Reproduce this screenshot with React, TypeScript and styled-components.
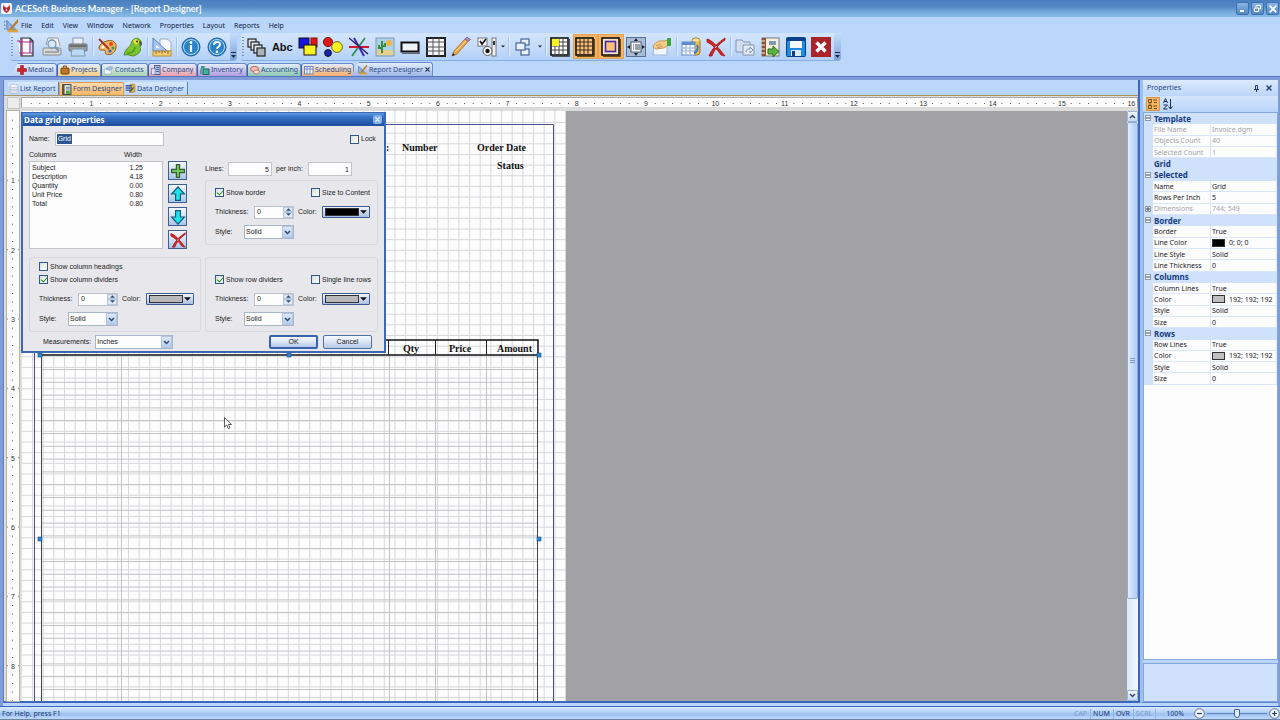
import React, { useEffect, useRef, useState } from "react";
import styled, { createGlobalStyle, css } from "styled-components";

const ui = `"Noto Sans", "Open Sans", sans-serif`;
const dlg = `"Liberation Sans", Arial, sans-serif`;

const GlobalStyle = createGlobalStyle`
  * { box-sizing: border-box; }
  body { margin: 0; font-family: ${ui}; font-size: 7px; line-height: 10px; color: #10213f; }
  button, input, select { font: inherit; color: inherit; margin: 0; padding: 0; border: 0; background: none; border-radius: 0; }
  button { white-space: nowrap; }
  svg { display: block; flex: none; }
`;

/* ---------- shell ---------- */

const Shell = styled.div`
  display: flex;
  flex-direction: column;
  height: 100vh;
  background: #bad7fb;
  overflow: hidden;
`;

const TitleBar = styled.header`
  display: flex;
  align-items: center;
  gap: 3px;
  height: 17px;
  padding: 0 1px;
  flex: none;
  background: linear-gradient(#4a7fbf 0, #5488c5 40%, #78afdf 75%, #86b9e5 100%);
  color: #f4faff;
`;

const AppTitle = styled.h1`
  margin: 0;
  flex: 1;
  font-family: Lato, ${ui};
  font-size: 9px;
  line-height: 14px;
  font-weight: 700;
`;

const WindowButton = styled.button`
  display: flex;
  align-items: center;
  justify-content: center;
  width: 13px;
  height: 13px;
  margin-left: -4px;
  border: 1px solid #3f70b0;
  border-radius: 2px;
  background: linear-gradient(#8ab4e4, #5488c5);
`;

const WindowButtons = styled.div`
  display: flex;
  gap: 6px;
  padding-left: 4px;
`;

const MenuBar = styled.nav`
  display: flex;
  align-items: center;
  gap: 9px;
  height: 16px;
  padding: 1px 0 0 4px;
  flex: none;
  button { line-height: 12px; }
  svg { margin-right: -6px; }
`;

const ToolbarRow = styled.div`
  display: flex;
  gap: 4px;
  height: 28px;
  padding-left: 10px;
  flex: none;
`;

const Toolbar = styled.div<{ $w: number }>`
  display: flex;
  align-items: stretch;
  width: ${(p) => p.$w}px;
  border-radius: 3px;
  border-bottom: 1px solid #86aee4;
  background: linear-gradient(#d3e5fd 0, #c6dcfb 50%, #b3d0f7 100%);
`;

const Grip = styled.span`
  width: 2px;
  margin: 4px 0 4px 1px;
  background: repeating-linear-gradient(#6f93c8 0 1px, transparent 1px 3px);
`;

const ToolButton = styled.button<{ $on?: boolean }>`
  display: flex;
  flex: 1;
  align-items: center;
  justify-content: center;
  margin: 1px 0;
  ${(p) => p.$on && css`background: linear-gradient(#f5b266, #fcb556); box-shadow: inset 0 0 0 1px #e2a05a;`}
`;

const CaretButton = styled.button`
  display: flex;
  align-items: center;
  justify-content: center;
  width: 8px;
`;

const Separator = styled.span`
  width: 1px;
  margin: 4px 1px;
  background: #a3c3ee;
  box-shadow: 1px 0 #e4effe;
`;

const Overflow = styled.button`
  display: flex;
  align-items: flex-end;
  justify-content: center;
  width: 7px;
  padding-bottom: 2px;
  border-radius: 0 3px 3px 0;
  background: linear-gradient(#c6dcfb, #7ea4d8);
`;

const ModuleTabs = styled.nav`
  display: flex;
  align-items: flex-end;
  height: 16px;
  padding-left: 10px;
  flex: none;
  border-bottom: 1px solid #5576bf;
`;

const ModuleTab = styled.button<{ $bg: string; $w: number; $first?: boolean; $active?: boolean }>`
  display: flex;
  align-items: center;
  gap: 1px;
  width: ${(p) => p.$w}px;
  height: 13px;
  padding-left: 2px;
  border: 1px solid #6b8ccb;
  border-bottom: 0;
  border-left-color: ${(p) => (p.$first || p.$active ? "transparent" : "#3d64ae")};
  border-radius: 3px 3px 0 0;
  color: #2b4b8c;
  background: linear-gradient(#e3ecfb, ${(p) => p.$bg});
  ${(p) => p.$first && css`padding-left: 6px; clip-path: polygon(8px 0, 100% 0, 100% 100%, 0 100%);`}
  ${(p) => p.$active && css`height: 14px; padding-left: 6px; margin-left: -3px; clip-path: polygon(8px 0, 100% 0, 100% 100%, 0 100%);`}
`;

const TabClose = styled.span`
  margin-left: auto;
  padding-right: 2px;
`;

const Workspace = styled.main`
  display: flex;
  flex: 1;
  min-height: 0;
  border: solid #7f9bd8;
  border-width: 3px 2px 0 3px;
`;

const Editor = styled.section`
  display: flex;
  flex-direction: column;
  flex: 1;
  min-width: 0;
  border-left: 1px solid #5d7fc4;
  border-right: 2px solid #3f66bd;
  border-bottom: 2px solid #3f66bd;
  margin-bottom: 3px;
`;

const ViewTabs = styled.nav`
  display: flex;
  align-items: flex-end;
  height: 16px;
  padding-left: 4px;
  flex: none;
  border-bottom: 1px solid #a9946a;
`;

const ViewTab = styled.button<{ $on?: boolean; $w: number }>`
  display: flex;
  align-items: center;
  gap: 1px;
  width: ${(p) => p.$w}px;
  height: 13px;
  padding-left: 1px;
  border-right: 1px solid #5a7fc0;
  color: #2b4b8c;
  background: linear-gradient(#d7e7fd, #bcd6f9);
  ${(p) => p.$on && css`background: linear-gradient(#fddcb0, #fbb661); border: 1px solid #d59a55; border-bottom: 0; border-radius: 2px 2px 0 0;`}
`;

/* ---------- rulers and canvas ---------- */

const RulerRow = styled.div`
  display: flex;
  height: 15px;
  flex: none;
  padding: 1px 0 0 3px;
  background: #dcdcdc;
`;

const Corner = styled.button`
  width: 13px;
  height: 12px;
  margin-right: 1px;
  border: 1px solid #c6c6c6;
  background: #ececec;
`;

const RulerStrip = styled.div<{ $vertical?: boolean }>`
  overflow: hidden;
  background: #fdfdfd;
  ${(p) => p.$vertical
    ? css`width: 12px; margin: 0 3px 0 3px; box-shadow: 0 0 0 1px #b9b3a6;`
    : css`flex: 1; min-width: 0; height: 11px; border: 1px solid #a8a8a8; border-bottom-color: #d8d8d8;`}
  text { font: 7px ${dlg}; fill: #333; text-anchor: middle; }
`;

const CanvasRow = styled.div`
  display: flex;
  flex: 1;
  min-height: 0;
  background: #e0dedb;
`;

const Canvas = styled.div`
  position: relative;
  flex: 1;
  min-width: 0;
  overflow: hidden;
  background: #a2a1a6;
`;

const FormPage = styled.div`
  width: 544px;
  height: 100%;
  overflow: hidden;
  background: #fdfdfd;
`;

const FormLabel = styled.span<{ $x: number; $y: number }>`
  position: absolute;
  left: ${(p) => p.$x}px;
  top: ${(p) => p.$y}px;
  font: bold 10px/12px "Liberation Serif", "Times New Roman", serif;
  color: #111;
  white-space: nowrap;
`;

const Cursor = styled.svg`
  position: absolute;
  left: 202px;
  top: 306px;
`;

const ScrollBar = styled.div`
  display: flex;
  flex-direction: column;
  width: 11px;
  background: linear-gradient(90deg, #d9e8fb, #f6faff);
`;

const ScrollButton = styled.button`
  display: flex;
  align-items: center;
  justify-content: center;
  height: 11px;
  border: 1px solid #9bb5d6;
  border-radius: 1px;
  background: linear-gradient(#f4f9ff, #c6daf3);
`;

const ScrollTrack = styled.div`
  flex: 1;
`;

const ScrollThumb = styled.div`
  display: flex;
  align-items: center;
  justify-content: center;
  height: 84%;
  border: 1px solid #8cabd8;
  border-radius: 2px;
  background: linear-gradient(90deg, #e3eefd, #c5dbf9 50%, #b1cdf5);
`;

/* ---------- dialog ---------- */

const Dialog = styled.div`
  position: absolute;
  left: 21px;
  top: 112px;
  width: 365px;
  border: solid #3c69b4;
  border-width: 1px 2px 2px 2px;
  background: #e8e7ec;
  font-family: ${dlg};
  color: #222;
`;

const DialogTitle = styled.div`
  display: flex;
  align-items: center;
  justify-content: space-between;
  height: 13px;
  padding: 0 2px 0 1px;
  background: linear-gradient(#5f9be0 0, #3672c4 30%, #1f4c9f 100%);
  color: #fff;
  font: bold 8px/12px "Open Sans", ${ui};
`;

const DialogClose = styled.button`
  display: flex;
  align-items: center;
  justify-content: center;
  width: 9px;
  height: 9px;
  border-radius: 2px;
  background: #7fb0ec;
`;

const DialogBody = styled.form`
  display: grid;
  grid-template-columns: 172px 1fr;
  column-gap: 4px;
  padding: 6px 6px 2px;
`;

const Line = styled.div<{ $gap?: number; $end?: boolean; $pad?: number }>`
  display: flex;
  align-items: center;
  gap: ${(p) => p.$gap ?? 4}px;
  height: 14px;
  padding-left: ${(p) => p.$pad ?? 0}px;
  ${(p) => p.$end && css`justify-content: flex-end;`}
`;

const TextInput = styled.input<{ $w: number; $right?: boolean }>`
  width: ${(p) => p.$w}px;
  height: 14px;
  padding: 0 2px;
  border: 1px solid #c3c3ca;
  background: #fdfdfd;
  text-align: ${(p) => (p.$right ? "right" : "left")};
`;

const SelectedInput = styled.div`
  display: flex;
  align-items: center;
  width: 109px;
  height: 14px;
  padding: 0 1px;
  border: 1px solid #c3c3ca;
  background: #fdfdfd;
  input { width: 15px; height: 10px; padding-left: 1px; background: #2d5590; color: #fff; }
`;

const Block = styled.div`
  display: flex;
  flex-direction: column;
`;

const ListHead = styled.div`
  display: flex;
  align-items: flex-end;
  height: 15px;
  padding-bottom: 1px;
  span:first-child { width: 95px; }
`;

const ListArea = styled.div`
  display: flex;
  gap: 5px;
`;

const ColumnList = styled.div`
  width: 134px;
  height: 88px;
  padding: 1px 2px;
  border: 1px solid #c3c3ca;
  background: #fdfdfd;
  table { border-collapse: collapse; width: 111px; line-height: 9px; font-size: 7px; }
  td { padding: 0; height: 9px; }
  td:last-child { text-align: right; }
`;

const Stack = styled.div`
  display: flex;
  flex-direction: column;
  gap: 4px;
`;

const SquareButton = styled.button`
  display: flex;
  align-items: center;
  justify-content: center;
  width: 19px;
  height: 19px;
  border: 1px solid #3f5f90;
  background: linear-gradient(#f6f9fe, #aac4e8);
`;

const Group = styled.fieldset<{ $pad: number; $mt?: number }>`
  display: block;
  min-width: 0;
  margin: ${(p) => p.$mt ?? 0}px 0 0;
  padding: ${(p) => p.$pad}px 6px 5px 9px;
  border: 1px solid #d6d6de;
  border-radius: 3px;
`;

const BottomGroup = styled(Group)`
  margin-top: auto;
`;

const CheckRow = styled.div`
  display: flex;
  align-items: center;
  justify-content: space-between;
  height: 13px;
`;

const LinesRow = styled.div`
  display: flex;
  align-items: center;
  height: 14px;
  margin-top: -3px;
  gap: 4px;
  label:first-child { width: 19px; }
  label { width: 28px; }
`;

const FooterLine = styled(Line)`
  margin-top: 3px;
  &:last-child { padding-right: 6px; }
`;

const FieldRow = styled.div<{ $col?: number }>`
  display: flex;
  align-items: center;
  height: 14px;
  margin-top: 6px;
  gap: 4px;
  > * { flex: none; }
  label:first-child { width: ${(p) => p.$col ?? 35}px; }
`;

const FieldCaption = styled.span`
  width: 20px;
`;

const Check = styled.label<{ $w?: number }>`
  display: flex;
  align-items: center;
  gap: 2px;
  ${(p) => p.$w && css`width: ${p.$w}px;`}
  white-space: nowrap;
  input {
    appearance: none;
    display: flex;
    justify-content: center;
    flex: none;
    width: 9px;
    height: 9px;
    border: 1px solid #2f5a8e;
    background: linear-gradient(135deg, #dcdcd8, #fff);
  }
  input:checked::after {
    content: "";
    width: 3px;
    height: 5px;
    border: solid #1f9a26;
    border-width: 0 1px 1px 0;
    transform: rotate(42deg);
  }
`;

const SpinBox = styled.span`
  display: flex;
  width: 40px;
  height: 13px;
  border: 1px solid #bcc3d0;
  background: #fdfdfd;
  input { width: 28px; padding-left: 2px; }
`;

const SpinButtons = styled.span`
  display: flex;
  flex: 1;
  flex-direction: column;
  button { flex: 1; display: flex; align-items: center; justify-content: center; border: 1px solid #b7c7de; background: #dce7f6; }
`;

const SelectBox = styled.span<{ $w: number }>`
  display: grid;
  width: ${(p) => p.$w}px;
  height: 14px;
  border: 1px solid #a9b6ca;
  background: #fdfdfd;
  select { grid-area: 1 / 1; appearance: none; padding-left: 1px; outline: 0; }
`;

const SelectArrow = styled.span`
  grid-area: 1 / 1;
  justify-self: end;
  display: flex;
  align-items: center;
  justify-content: center;
  width: 11px;
  border: 1px solid #b3c6e2;
  background: linear-gradient(#dbe8f9, #b4cdee);
  pointer-events: none;
`;

const ColorButton = styled.button`
  display: flex;
  align-items: center;
  justify-content: space-between;
  width: 48px;
  height: 12px;
  padding: 0 2px;
  border: 1px solid #3c5d92;
  border-radius: 1px;
  background: linear-gradient(#f2f6fc, #a9bfe0);
`;

const Swatch = styled.span<{ $c: string; $w: number }>`
  flex: none;
  width: ${(p) => p.$w}px;
  height: 8px;
  border: 1px solid #333;
  background: ${(p) => p.$c};
`;

const PushButton = styled.button<{ $default?: boolean }>`
  width: 49px;
  height: 14px;
  border: ${(p) => (p.$default ? "2px" : "1px")} solid ${(p) => (p.$default ? "#3763ae" : "#4c72a8")};
  border-radius: 2px;
  background: linear-gradient(#f7faff, #dbe5f5 50%, #b4c8e8);
  line-height: 8px;
`;

/* ---------- property panel ---------- */

const Panel = styled.aside`
  display: flex;
  flex-direction: column;
  width: 138px;
  flex: none;
  margin-bottom: 3px;
  border-left: 3px solid #9fbfee;
  border-bottom: 1px solid #5f86c6;
`;

const PanelTitle = styled.div`
  display: flex;
  align-items: center;
  height: 16px;
  gap: 7px;
  padding: 0 6px 0 4px;
  background: linear-gradient(#dceafd, #bcd6fa);
  color: #27467f;
  h2 { flex: 1; margin: 0; font-size: 7px; font-weight: 400; }
`;

const PanelTools = styled.div`
  display: flex;
  align-items: center;
  gap: 1px;
  height: 16px;
  padding-left: 3px;
  background: linear-gradient(#d3e5fd, #b9d4f9);
`;

const PanelTool = styled.button<{ $on?: boolean }>`
  display: flex;
  align-items: center;
  justify-content: center;
  width: 14px;
  height: 14px;
  ${(p) => p.$on && css`background: #fbb75f; border: 1px solid #d8964a;`}
`;

const PropScroll = styled.div`
  flex: 1;
  min-height: 0;
  border: 1px solid #84a7dd;
  background: #fdfdfd;
`;

const PropTable = styled.table`
  width: 100%;
  height: 272px;
  table-layout: fixed;
  border-collapse: collapse;
  line-height: 9px;
  td, th { padding: 0 0 0 1px; white-space: nowrap; text-align: left; border: 1px solid #dbe7f8; border-top: 0; font-weight: 400; }
  td:first-child, th:first-child { padding: 0; background: #d0e2fb; border-color: #d0e2fb; }
`;

const CategoryRow = styled.tr`
  th, th:first-child { background: #d0e2fb; border-color: #d0e2fb; color: #173c80; font-size: 8px; font-weight: 700; }
`;

const PropRow = styled.tr<{ $dim?: boolean }>`
  color: ${(p) => (p.$dim ? "#a3a3a8" : "#1b1b1f")};
`;

const ColorValue = styled.span`
  display: flex;
  align-items: center;
  gap: 4px;
`;

const Expander = styled.button`
  display: flex;
  align-items: center;
  justify-content: center;
  width: 6px;
  height: 6px;
  border: 1px solid #8b98b0;
  background: #fdfdfd;
`;

const Description = styled.div`
  height: 39px;
  margin-top: 3px;
  border: 1px solid #84a7dd;
  background: #d0e2fb;
`;

/* ---------- status bar ---------- */

const StatusBar = styled.footer`
  display: flex;
  align-items: center;
  height: 14px;
  flex: none;
  padding: 1px 0 0 2px;
  border-top: 1px solid #3f66bd;
  border-bottom: 1px solid #6a83a8;
  background: linear-gradient(#dbe9fd 0, #b6d2f8 40%, #9dc0f0 60%, #c1dafb 100%);
  color: #1a3a76;
`;

const Message = styled.span`
  flex: 1;
`;

const Indicator = styled.span<{ $off?: boolean }>`
  padding: 0 3px 0 2px;
  border-right: 1px solid #90b2e2;
  color: ${(p) => (p.$off ? "#7c9cca" : "#1a3a76")};
`;

const Zoom = styled.div`
  display: flex;
  align-items: center;
  gap: 2px;
  padding-left: 10px;
  button { display: flex; }
  label { margin-right: 8px; }
  input { appearance: none; width: 60px; height: 11px; background: linear-gradient(#5f86bd, #5f86bd) center / 100% 1px no-repeat; }
  input::-webkit-slider-thumb { appearance: none; width: 6px; height: 9px; border: 1px solid #44629a; border-radius: 1px 1px 3px 3px; background: #e4effd; }
`;

/* ---------- icons ---------- */

const Svg = ({ s = 20, children }: { s?: number; children: React.ReactNode }) => (
  <svg width={s} height={s} viewBox="0 0 20 20" fill="none" aria-hidden="true">{children}</svg>
);

const gridPath = "M5 1V19M9 1V19M13 1V19M1 5H19M1 9H19M1 13H19";

const icons: Record<string, React.ReactNode> = {
  page: <><rect x="3" y="2" width="12" height="16" fill="#fff" /><path d="M5 1H14L17 4V19H5Z" stroke="#333" strokeWidth="1.2" /><path d="M1 4H4M6 1V19M14 4V16M3 5H17M3 16H17" stroke="#a52a8a" strokeWidth="1.2" /><path d="M14 1V4H17" stroke="#333" /></>,
  preview: <><path d="M4 8L6 1H16L18 9" fill="#f5f5f2" stroke="#999" /><rect x="1" y="11" width="18" height="7" rx="1" fill="#d8d8d5" stroke="#8a8a88" /><path d="M3 15H17" stroke="#777" /><circle cx="10" cy="7" r="4" fill="#d6eafa" stroke="#7794b5" strokeWidth="1.3" /><path d="M13 10L17 14" stroke="#7794b5" strokeWidth="2" /></>,
  print: <><rect x="5" y="1" width="10" height="7" fill="#e8f1fb" stroke="#8796a8" /><rect x="1" y="7" width="18" height="7" rx="1" fill="#9a9d9f" stroke="#6d7072" /><path d="M2 9H18" stroke="#444" /><path d="M4 12H16L17 19H3Z" fill="#b8dbf3" stroke="#7d98ac" /></>,
  palette: <><path d="M10 4C16 2 20 6 19 11C18 16 13 19 9 17C7 16 10 14 7 13C4 13 2 14 2 10C3 7 6 5 10 4Z" fill="#f2b45c" stroke="#8f5a22" /><circle cx="14" cy="7" r="2" fill="#f03d2a" /><circle cx="16" cy="11" r="1.6" fill="#3a9d3a" /><circle cx="13" cy="14" r="1.6" fill="#285fc7" /><circle cx="6" cy="10" r="1.5" fill="#fff" /><path d="M2 2L12 12" stroke="#a7312a" strokeWidth="1.8" /></>,
  parrot: <><path d="M1 18C2 12 6 11 8 7C9 2 13 0 16 2C19 4 19 8 17 10C19 14 15 18 10 19C7 19 6 17 1 18Z" fill="#7cc52c" stroke="#3f7d14" strokeWidth=".8" /><path d="M4 16C8 17 12 14 12 10" stroke="#4a9a20" strokeWidth="1.5" /><path d="M10 4C12 1 16 2 16 5L13 8Z" fill="#f3e12c" /><path d="M16 4C19.500 4 20 8 17 9Z" fill="#555" /><circle cx="14" cy="4.500" r=".9" fill="#222" /></>,
  ruler: <><path d="M8 2H15L19 5V14H8Z" fill="#fafcff" stroke="#9ab" /><path d="M1 1V14H15Z" fill="#a9c5ef" stroke="#5a83c5" /><path d="M4 8V11H8Z" fill="#f4f8ff" /><rect x="1" y="14" width="18" height="5" fill="#f4cf74" stroke="#b98c34" /><path d="M4 14V17M7 14V16M10 14V17M13 14V16M16 14V17" stroke="#8c6420" /></>,
  info: <><circle cx="10" cy="10" r="9" fill="#2d82c6" stroke="#1c5f9e" /><circle cx="10" cy="10" r="7.5" stroke="#b6dcf5" /><circle cx="10" cy="5.5" r="1.4" fill="#fff" /><path d="M10 8V15" stroke="#fff" strokeWidth="2.2" /></>,
  help: <><circle cx="10" cy="10" r="9" fill="#2d82c6" stroke="#1c5f9e" /><circle cx="10" cy="10" r="7.5" stroke="#b6dcf5" /><path d="M7 8C7 4 13 4 13 7.5C13 10 10 9.5 10 12" stroke="#fff" strokeWidth="1.9" /><circle cx="10" cy="14.7" r="1.3" fill="#fff" /></>,
  layers: <g stroke="#222" strokeWidth="1.2" fill="#dfe7ee"><rect x="1" y="2" width="8" height="8" /><rect x="4" y="5" width="8" height="8" /><rect x="7" y="8" width="8" height="8" /><rect x="10" y="11" width="8" height="8" fill="#aab4bd" /></g>,
  squares: <><rect x="1" y="1" width="10" height="10" fill="#1616e0" stroke="#111" /><rect x="13" y="1" width="6" height="9" fill="#e01818" stroke="#7a1010" /><rect x="6" y="8" width="12" height="10" fill="#fbf321" stroke="#111" /></>,
  circles: <><circle cx="5" cy="5" r="4.6" fill="#e01818" stroke="#7a1010" /><circle cx="14" cy="10" r="5.4" fill="#fbf321" stroke="#6d6a20" /><circle cx="5" cy="16" r="3.4" fill="#1626b8" stroke="#111" /></>,
  lines: <><path d="M5 1L15 19" stroke="#3b2bb5" strokeWidth="2" /><path d="M16 1L3 19" stroke="#2a8a48" strokeWidth="1.6" /><path d="M0 10H20" stroke="#d01830" strokeWidth="2" /><path d="M0 1L19 17" stroke="#20106a" strokeWidth="1.2" /></>,
  image: <><rect x="1" y="1" width="18" height="18" fill="#a7d2ea" stroke="#8b98a5" /><rect x="2" y="13" width="16" height="5" fill="#e7cf8c" /><circle cx="14" cy="6" r="3" fill="#f4b23c" /><path d="M7 4V16M4 8V11H7M10 6V9H7" stroke="#3d8b37" strokeWidth="2" /></>,
  rect: <><rect x="1.5" y="5.5" width="17" height="9" fill="#eef2f7" stroke="#111" strokeWidth="2" /><path d="M2 16.5H20V7" stroke="#667" /></>,
  table: <><rect x="1" y="1" width="18" height="18" fill="#f6f8fa" stroke="#222" strokeWidth="2" /><path d="M7 1V19M13 1V19M1 5H19M1 10H19M1 14H19" stroke="#555" /></>,
  pencil: <><path d="M1 19L3 14L14 2L17 4.500L6 17Z" fill="#f3a84a" stroke="#a76820" strokeWidth=".8" /><path d="M14 2L16 0L19.500 2.500L17 4.500Z" fill="#b98bc8" stroke="#75578a" strokeWidth=".8" /><path d="M1 19L2 16L4 18Z" fill="#222" /><path d="M4 15L15 4" stroke="#fbd695" /></>,
  controls: <><rect x="1" y="1" width="9" height="8" fill="#fff" stroke="#777" /><path d="M3 4L5 7L9 2" stroke="#111" strokeWidth="1.7" /><rect x="15" y="1" width="4" height="18" fill="#f4f4f4" stroke="#777" /><rect x="16" y="4" width="2" height="4" fill="#333" /><circle cx="10.500" cy="14" r="4.500" fill="#fff" stroke="#555" /><circle cx="10.500" cy="14" r="2.200" fill="#111" /></>,
  arrange: <g stroke="#526f9c" strokeWidth="1.3" fill="#e8f1fd"><rect x="8" y="2" width="8" height="6" /><rect x="8" y="12" width="8" height="6" /><rect x="3" y="6" width="9" height="7" /></g>,
  snap: <><rect x="1" y="1" width="17" height="17" fill="#fff" stroke="#111" strokeWidth="1.6" /><path d={gridPath} stroke="#444" /><rect x="2" y="2" width="7" height="7" fill="#f8f020" /><path d="M19.500 2V19.500H2" stroke="#555" /></>,
  grid: <><rect x="1" y="1" width="17" height="17" fill="#fbc078" stroke="#111" strokeWidth="1.6" /><path d={gridPath} stroke="#3a2c1c" /><path d="M19.500 2V19.500H2" stroke="#6b4a20" /></>,
  frame: <><rect x="1" y="1" width="17" height="17" fill="#fde3c4" stroke="#111" strokeWidth="1.600" /><rect x="4.500" y="4.500" width="10" height="10" fill="#fbc078" stroke="#3c2bb0" strokeWidth="1.600" /><path d="M19.500 2V19.500H2" stroke="#6b4a20" /></>,
  fit: <><rect x="0.500" y="0.500" width="19" height="19" fill="#a9bdd6" stroke="#5a7090" /><rect x="5" y="5" width="10" height="10" fill="#fff" stroke="#44576f" /><path d="M9 8H14M9 10H14M9 12H14M7 8H8M7 10H8M7 12H8" stroke="#345" /><path d="M10 1L12 4H8ZM10 19L12 16H8ZM1 10L4 8V12ZM19 10L16 8V12Z" fill="#223" /></>,
  hand: <><path d="M2 9H15V18H1Z" fill="#f2f7fd" stroke="#9fb4d1" /><path d="M1 10C3 5 7 3 12 4L16 3V8L12 11L4 12Z" fill="#f6cc86" stroke="#b98740" strokeWidth=".8" /><path d="M4 9L9 7M5 11L11 9" stroke="#b98740" strokeWidth=".8" /><rect x="15" y="1" width="4" height="8" rx="1" fill="#38a838" /></>,
  dbtable: <><rect x="11" y="1" width="8" height="17" rx="3" fill="#f0bd4a" stroke="#a77a20" /><ellipse cx="15" cy="3" rx="3.500" ry="1.500" fill="#fbe3a0" /><rect x="1" y="5" width="13" height="13" fill="#fff" stroke="#6a8fc0" /><rect x="1" y="5" width="13" height="3" fill="#5d8fd0" /><path d="M5 8V18M9 8V18M1 11H14M1 14H14" stroke="#8badd6" /><path d="M16 8C18 11 16 15 13 16" stroke="#3c7ac8" strokeWidth="2" /></>,
  remove: <path d="M1 2C6 3 11 9 19 19L15 18C11 12 7 8 1 5ZM19 1C13 5 6 11 3 19H6C8 13 13 7 19 3Z" fill="#d8221c" stroke="#9f1410" strokeWidth=".8" />,
  folders: <><path d="M1 3H7L9 5H15V15H1Z" fill="#d2dded" stroke="#8496b0" /><path d="M8 8H19V18H8Z" fill="#e3ebf6" stroke="#8496b0" /><path d="M11 15C11 12 13 12 15 12V10L18 13L15 16V14" stroke="#7f8fa8" /></>,
  exporter: <><rect x="2" y="1" width="17" height="18" fill="#f6f0dc" stroke="#777" /><rect x="2" y="1" width="4" height="18" fill="#8a5535" /><path d="M1 4H5M1 8H5M1 12H5M1 16H5" stroke="#eee" /><path d="M9 5H16M9 7H16" stroke="#5880a8" strokeWidth="1.500" /><path d="M8 12H13V9L19 14.500L13 20V17H8Z" fill="#5bb23c" stroke="#2c6f1c" /></>,
  save: <><rect x="0.500" y="0.500" width="19" height="19" rx="1" fill="#1f8be0" stroke="#0c3f8c" /><rect x="1" y="1" width="18" height="3" fill="#0c418f" /><rect x="4" y="4" width="12" height="7" fill="#f6faff" /><rect x="5" y="13" width="10" height="6" fill="#dfeaf8" /><rect x="6" y="14" width="3" height="5" fill="#153f7c" /></>,
  close: <><rect x="0" y="0" width="20" height="20" fill="#a92328" /><path d="M5.500 5.500L14.500 14.500M14.500 5.500L5.500 14.500" stroke="#fff" strokeWidth="3.400" /></>,
  designer: <><path d="M1 2V15H14Z" fill="#8fb0e0" stroke="#4468a5" /><path d="M6 15L18 1" stroke="#b87b2c" strokeWidth="3" /><path d="M2 17H18" stroke="#dca23c" strokeWidth="4" /></>,
  medical: <path d="M7 1H13V7H19V13H13V19H7V13H1V7H7Z" fill="#d0202a" stroke="#8f1018" />,
  projects: <><rect x="2" y="6" width="16" height="12" rx="2" fill="#c07828" stroke="#74430f" strokeWidth="2" /><path d="M7 5V2H13V5" stroke="#74430f" strokeWidth="2" /></>,
  contacts: <><path d="M1 8H14V18H1Z" fill="#f4f8fd" stroke="#8fa6c6" /><path d="M4 8L12 3L18 5L12 11Z" fill="#9fc3ea" stroke="#6484ac" /></>,
  company: <><rect x="7" y="1" width="11" height="18" fill="#b9c7e8" stroke="#4b5f95" strokeWidth="2" /><rect x="1" y="7" width="7" height="12" fill="#dce4f4" stroke="#4b5f95" /><path d="M10 5H16M10 9H16M10 13H16" stroke="#4b5f95" strokeWidth="2" /></>,
  inventory: <><path d="M2 2H9V7H2Z" fill="#2f9a7c" /><rect x="6" y="8" width="12" height="11" fill="#39b5a4" stroke="#1c6b62" strokeWidth="2" /><path d="M2 7V18" stroke="#246e5c" strokeWidth="2" /></>,
  accounting: <><ellipse cx="9" cy="8" rx="8" ry="5" fill="#f6c3bd" stroke="#c05a52" strokeWidth="2" /><ellipse cx="13" cy="14" rx="6" ry="4" fill="#f9dcd6" stroke="#c05a52" strokeWidth="1.500" /></>,
  scheduling: <><rect x="1" y="3" width="17" height="15" fill="#f6f9fe" stroke="#6b88bd" strokeWidth="2" /><path d="M6 3V18M12 3V18M1 8H18" stroke="#6b88bd" strokeWidth="2" /></>,
  listrep: <><path d="M2 4V16C2 20 18 20 18 16V4" fill="#dfe6ee" stroke="#8f9db0" /><ellipse cx="10" cy="4" rx="8" ry="3" fill="#fff" stroke="#8f9db0" /><path d="M2 10C4 13 16 13 18 10" stroke="#8f9db0" /></>,
  formdes: <><rect x="3" y="1" width="15" height="18" fill="#e4efe2" stroke="#3e4c4a" strokeWidth="2" /><path d="M5 1V19" stroke="#7d4a22" strokeWidth="3" /><path d="M9 6H16M9 9H16" stroke="#4a7aa8" strokeWidth="2" /><path d="M9 12H16V18H9Z" fill="#48a83c" /></>,
  datades: <><rect x="9" y="2" width="9" height="15" rx="2" fill="#e9b23c" stroke="#8f6a1c" /><path d="M1 5H13M1 9H13M1 13H13" stroke="#3b5f9c" strokeWidth="2.500" /><path d="M8 17L16 8" stroke="#55504a" strokeWidth="2" /></>,
  logo: <><rect width="20" height="20" rx="3" fill="#f7f4f4" /><path d="M5 3C2 9 4 15 10 18C16 15 18 9 15 3C14 7 12 8 10 8C8 8 6 7 5 3Z" fill="#c02432" /><path d="M10 10L12 14H8Z" fill="#fff" /></>,
  plus: <path d="M8 2H12V8H18V12H12V18H8V12H2V8H8Z" fill="#6fc95a" stroke="#3c5a3a" strokeWidth="1.500" />,
  up: <path d="M10 1L18 10H13V18H7V10H2Z" fill="#1fe3ea" stroke="#185a7c" strokeWidth="1.500" />,
  down: <path d="M10 19L18 10H13V2H7V10H2Z" fill="#1fe3ea" stroke="#185a7c" strokeWidth="1.500" />,
};

const Abc = styled.span`
  font: bold 11px/20px ${dlg};
  color: #111;
`;

const Icon = ({ n, s = 20 }: { n: string; s?: number }) => <Svg s={s}>{icons[n]}</Svg>;

const Caret = ({ c = "#222", w = 5 }: { c?: string; w?: number }) => (
  <svg width={w} height={w > 5 ? 4 : 3} viewBox="0 0 6 3" aria-hidden="true"><path d="M0 0H6L3 3Z" fill={c} /></svg>
);

const Chevron = ({ up }: { up?: boolean }) => (
  <svg width="7" height="5" viewBox="0 0 7 5" fill="none" aria-hidden="true">
    <path d={up ? "M1 4L3.500 1.500L6 4" : "M1 1L3.500 3.500L6 1"} stroke="#33496d" strokeWidth="1.500" />
  </svg>
);

const Cross = ({ c, s = 6 }: { c: string; s?: number }) => (
  <svg width={s} height={s} viewBox="0 0 6 6" fill="none" aria-hidden="true"><path d="M0.500 0.500L5.500 5.500M5.500 0.500L0.500 5.500" stroke={c} strokeWidth="1.300" /></svg>
);

const OverflowMark = () => (
  <svg width="5" height="6" viewBox="0 0 5 6" aria-hidden="true"><path d="M0 0H5V1H0ZM0 3H5L2.500 6Z" fill="#1c2c48" /></svg>
);

const renderTool = (t: string, i: number) => {
  if (t === "|") return <Separator key={i} />;
  if (t === "v") return <CaretButton key={i} type="button" aria-label="More"><Caret w={4} /></CaretButton>;
  if (t === "abc") return <ToolButton key={i} type="button"><Abc>Abc</Abc></ToolButton>;
  return <ToolButton key={i} type="button" aria-label={t} $on={t === "grid" || t === "frame"}><Icon n={t} /></ToolButton>;
};

const leftTools = ["page", "preview", "print", "|", "palette", "parrot", "|", "ruler", "|", "info", "help"];
const rightTools = ["layers", "abc", "squares", "circles", "lines", "image", "rect", "table", "pencil", "controls", "v", "|", "arrange", "v", "|", "snap", "grid", "frame", "fit", "hand", "|", "dbtable", "remove", "|", "folders", "exporter", "save", "close"];

const modules = [
  { t: "Medical", i: "medical", w: 47, bg: "#b8cff3" },
  { t: "Projects", i: "projects", w: 44, bg: "#f7cf83" },
  { t: "Contacts", i: "contacts", w: 47, bg: "#a9d2b0" },
  { t: "Company", i: "company", w: 49, bg: "#eb9fab" },
  { t: "Inventory", i: "inventory", w: 50, bg: "#b29ce0" },
  { t: "Accounting", i: "accounting", w: 54, bg: "#8cc8b2" },
  { t: "Scheduling", i: "scheduling", w: 53, bg: "#f9ae66" },
];

/* ---------- drawings ---------- */

const INCH = 208 / 3;
const range = (n: number) => Array.from({ length: n }, (_, i) => i);

/* Draws ticks and inch numbers for as much of the strip as is visible. */
const Ruler = ({ vertical }: { vertical?: boolean }) => {
  const strip = useRef<HTMLDivElement>(null);
  const [size, setSize] = useState(0);
  useEffect(() => {
    const el = strip.current;
    if (!el) return;
    const measure = () => setSize(vertical ? el.clientHeight : el.clientWidth);
    measure();
    const observer = new ResizeObserver(measure);
    observer.observe(el);
    return () => observer.disconnect();
  }, [vertical]);
  return (
    <RulerStrip $vertical={vertical} ref={strip}>
      <svg width={vertical ? 12 : size} height={vertical ? size : 9}>
        {range(Math.ceil((size * 8) / INCH)).slice(1).map((k) => {
          const p = (k * INCH) / 8;
          if (k % 8 === 0) {
            if (p + 5 > size) return null;
            return vertical
              ? <g key={k}><text x="6" y={p + 3}>{k / 8}</text><path d={`M0 ${p}h1M11 ${p}h1`} stroke="#888" /></g>
              : <text key={k} x={p} y="8">{k / 8}</text>;
          }
          return <rect key={k} x={vertical ? 5 : p} y={vertical ? p : 5} width="1" height="1" fill="#555" />;
        })}
      </svg>
    </RulerStrip>
  );
};

const Handle = ({ x, y }: { x: number; y: number }) => (
  <rect x={x - 2} y={y - 2} width="4" height="4" fill="#2f86cf" stroke="#174a80" strokeWidth=".6" />
);

const FormDrawing = () => (
  <svg width="544" height="1200" fill="none" aria-hidden="true">
    <g stroke="#d8d8dd">
      {range(51).map((k) => <path key={k} d={`M${10.5 + k * 10.66} 0V1200`} />)}
      {range(112).map((k) => <path key={k} d={`M0 ${11.5 + k * 10.65}H544`} />)}
    </g>
    <path d="M12.500 1200V13.500H531.500V1200" stroke="#4a4f88" />
    <g stroke="#c2c2c5">
      {range(60).map((k) => <path key={k} d={`M19 ${258.5 + k * 12.8}H516`} />)}
      <path d="M99.500 245V1200M367.500 245V1200M413.500 245V1200M464.500 245V1200" />
    </g>
    <path d="M19.500 244V1200M515.500 244V1200" stroke="#444" />
    <rect x="19" y="229" width="497" height="15" stroke="#111" strokeWidth="1.500" />
    <path d="M366.500 229V244M413.500 229V244M464.500 229V244" stroke="#222" />
    <Handle x={18} y={244} /><Handle x={267} y={244} /><Handle x={517} y={244} />
    <Handle x={18} y={428} /><Handle x={517} y={428} />
  </svg>
);

/* ---------- dialog pieces ---------- */

const Select = ({ id, w, value }: { id: string; w: number; value: string }) => (
  <SelectBox $w={w}>
    <select id={id} defaultValue={value}><option>{value}</option></select>
    <SelectArrow><Chevron /></SelectArrow>
  </SelectBox>
);

const LineStyle = ({ id, color }: { id: string; color: string }) => (
  <>
    <FieldRow>
      <label htmlFor={`${id}-t`}>Thickness:</label>
      <SpinBox>
        <input id={`${id}-t`} defaultValue="0" />
        <SpinButtons>
          <button type="button" aria-label="Increase"><svg width="5" height="3" viewBox="0 0 6 3"><path d="M0 3H6L3 0Z" fill="#33496d" /></svg></button>
          <button type="button" aria-label="Decrease"><Caret c="#33496d" /></button>
        </SpinButtons>
      </SpinBox>
      <FieldCaption>Color:</FieldCaption>
      <ColorButton type="button" aria-label="Color"><Swatch $c={color} $w={34} /><Caret c="#111" w={7} /></ColorButton>
    </FieldRow>
    <FieldRow $col={25}>
      <label htmlFor={`${id}-s`}>Style:</label>
      <Select id={`${id}-s`} w={50} value="Solid" />
    </FieldRow>
  </>
);

const CheckBox = ({ t, on, w }: { t: string; on?: boolean; w?: number }) => (
  <Check $w={w}><input type="checkbox" defaultChecked={on} />{t}</Check>
);

const columns = [["Subject", "1.25"], ["Description", "4.18"], ["Quantity", "0.00"], ["Unit Price", "0.80"], ["Total", "0.80"]];

const GridDialog = () => (
  <Dialog role="dialog" aria-labelledby="dialog-title">
    <DialogTitle>
      <span id="dialog-title">Data grid properties</span>
      <DialogClose type="button" aria-label="Close"><Cross c="#fff" s={5} /></DialogClose>
    </DialogTitle>
    <DialogBody>
      <Line $gap={5}>
        <label htmlFor="grid-name">Name:</label>
        <SelectedInput><input id="grid-name" defaultValue="Grid" /></SelectedInput>
      </Line>
      <Line $end><CheckBox t="Lock" w={28} /></Line>
      <Block>
        <ListHead><span>Columns</span><span>Width</span></ListHead>
        <ListArea>
          <ColumnList>
            <table><tbody>{columns.map(([a, b]) => <tr key={a}><td>{a}</td><td>{b}</td></tr>)}</tbody></table>
          </ColumnList>
          <Stack>
            {["plus", "up", "down", "remove"].map((n) => (
              <SquareButton key={n} type="button" aria-label={n}><Icon n={n} s={16} /></SquareButton>
            ))}
          </Stack>
        </ListArea>
        <Group $pad={2} $mt={8}>
          <CheckRow><CheckBox t="Show column headings" /></CheckRow>
          <CheckRow><CheckBox t="Show column dividers" on /></CheckRow>
          <LineStyle id="col" color="#b9b9bb" />
        </Group>
      </Block>
      <Block>
        <Stack>
          <ListHead />
          <LinesRow>
            <label htmlFor="lines">Lines:</label>
            <TextInput id="lines" $w={44} $right defaultValue="5" />
            <label htmlFor="per">per inch:</label>
            <TextInput id="per" $w={44} $right defaultValue="1" />
          </LinesRow>
        </Stack>
        <Group $pad={5} $mt={4}>
          <CheckRow><CheckBox t="Show border" on /><CheckBox t="Size to Content" w={60} /></CheckRow>
          <LineStyle id="border" color="#000" />
        </Group>
        <BottomGroup $pad={2}>
          <CheckRow />
          <CheckRow><CheckBox t="Show row dividers" on /><CheckBox t="Single line rows" w={60} /></CheckRow>
          <LineStyle id="row" color="#b9b9bb" />
        </BottomGroup>
      </Block>
      <FooterLine $pad={14} $gap={4}>
        <label htmlFor="measure">Measurements:</label>
        <Select id="measure" w={78} value="Inches" />
      </FooterLine>
      <FooterLine $end $gap={5}>
        <PushButton type="button" $default>OK</PushButton>
        <PushButton type="button">Cancel</PushButton>
      </FooterLine>
    </DialogBody>
  </Dialog>
);

/* ---------- property data ---------- */

type Prop = { n: string; v?: string; cat?: boolean; dim?: boolean; c?: string; x?: boolean };
const props: Prop[] = [
  { n: "Template", cat: true, x: true },
  { n: "File Name", v: "Invoice.dgm", dim: true },
  { n: "Objects Count", v: "40", dim: true },
  { n: "Selected Count", v: "1", dim: true },
  { n: "Grid", cat: true },
  { n: "Selected", cat: true, x: true },
  { n: "Name", v: "Grid" },
  { n: "Rows Per Inch", v: "5" },
  { n: "Dimensions", v: "744; 549", dim: true, x: true },
  { n: "Border", cat: true, x: true },
  { n: "Border", v: "True" },
  { n: "Line Color", v: "0; 0; 0", c: "#000" },
  { n: "Line Style", v: "Solid" },
  { n: "Line Thickness", v: "0" },
  { n: "Columns", cat: true, x: true },
  { n: "Column Lines", v: "True" },
  { n: "Color", v: "192; 192; 192", c: "#c0c0c0" },
  { n: "Style", v: "Solid" },
  { n: "Size", v: "0" },
  { n: "Rows", cat: true, x: true },
  { n: "Row Lines", v: "True" },
  { n: "Color", v: "192; 192; 192", c: "#c0c0c0" },
  { n: "Style", v: "Solid" },
  { n: "Size", v: "0" },
];

const Expand = ({ plus }: { plus?: boolean }) => (
  <Expander type="button" aria-label="Expand">
    <svg width="4" height="4" viewBox="0 0 4 4" aria-hidden="true"><path d={plus ? "M0 2H4M2 0V4" : "M0 2H4"} stroke="#345" /></svg>
  </Expander>
);

const PropertyPanel = () => (
  <Panel>
    <PanelTitle>
      <h2>Properties</h2>
      <svg width="5" height="7" viewBox="0 0 5 7" fill="none" aria-hidden="true"><path d="M1.500 4V.500H3.500V4M0 4.500H5M2.500 4.500V7" stroke="#1d3a6e" /></svg>
      <Cross c="#1d3a6e" />
    </PanelTitle>
    <PanelTools>
      <PanelTool type="button" $on aria-label="Categorized">
        <svg width="10" height="10" viewBox="0 0 10 10" fill="none" aria-hidden="true"><path d="M.500 .500H3.500V3.500H.500ZM.500 6.500H3.500V9.500H.500ZM5 1H9M6 3.500H9M5 7H9M6 9.500H9M2 3.500V6" stroke="#6b4a20" /></svg>
      </PanelTool>
      <PanelTool type="button" aria-label="Alphabetical">
        <svg width="10" height="12" viewBox="0 0 10 12" fill="none" aria-hidden="true"><path d="M.500 5L2.500 .500L4.500 5M1 3.500H4M.500 7H4.500L.500 11H4.500M7.500 1V11M5.500 8.500L7.500 11L9.500 8.500" stroke="#1d2f55" /></svg>
      </PanelTool>
    </PanelTools>
    <PropScroll>
      <PropTable>
        <colgroup><col width="8" /><col width="58" /><col /></colgroup>
        <tbody>
          {props.map((p, i) => p.cat ? (
            <CategoryRow key={i}>
              <th>{p.x && <Expand />}</th>
              <th colSpan={2}>{p.n}</th>
            </CategoryRow>
          ) : (
            <PropRow key={i} $dim={p.dim}>
              <td>{p.x && <Expand plus />}</td>
              <td>{p.n}</td>
              <td>{p.c ? <ColorValue><Swatch $c={p.c} $w={13} />{p.v}</ColorValue> : p.v}</td>
            </PropRow>
          ))}
        </tbody>
      </PropTable>
    </PropScroll>
    <Description />
  </Panel>
);

const ZoomIcon = ({ plus }: { plus?: boolean }) => (
  <svg width="11" height="11" viewBox="0 0 11 11" fill="none" aria-hidden="true">
    <circle cx="5.500" cy="5.500" r="4.800" fill="#f2f7fe" stroke="#5b6f92" />
    <path d={plus ? "M3 5.500H8M5.500 3V8" : "M3 5.500H8"} stroke="#2b3f66" strokeWidth="1.200" />
  </svg>
);

export default function App() {
  return (
    <Shell>
      <GlobalStyle />
      <TitleBar>
        <Icon n="logo" s={11} />
        <AppTitle>ACESoft Business Manager - [Report Designer]</AppTitle>
        <WindowButtons>
          <WindowButton type="button" aria-label="Minimize"><svg width="9" height="9" viewBox="0 0 9 9"><path d="M2 6H6V8H2Z" fill="#fff" /></svg></WindowButton>
          <WindowButton type="button" aria-label="Restore"><svg width="9" height="9" viewBox="0 0 9 9" fill="none"><path d="M3 3V1.500H7.500V5H6M1.500 4H5.500V7.500H1.500Z" stroke="#fff" /></svg></WindowButton>
          <WindowButton type="button" aria-label="Close"><Cross c="#fff" s={8} /></WindowButton>
        </WindowButtons>
      </TitleBar>
      <MenuBar>
        <Svg s={14}><path d="M1 3V5M1 8V10M1 13V15" stroke="#6f93c8" strokeWidth="2" /><g transform="translate(3 0)">{icons.designer}</g></Svg>
        {["File", "Edit", "View", "Window", "Network", "Properties", "Layout", "Reports", "Help"].map((m) => (
          <button key={m} type="button">{m}</button>
        ))}
      </MenuBar>
      <ToolbarRow>
        <Toolbar $w={227}>
          <Grip />
          {leftTools.map(renderTool)}
          <Overflow type="button" aria-label="Toolbar options"><OverflowMark /></Overflow>
        </Toolbar>
        <Toolbar $w={600}>
          <Grip />
          {rightTools.map(renderTool)}
          <Overflow type="button" aria-label="Toolbar options"><OverflowMark /></Overflow>
        </Toolbar>
      </ToolbarRow>
      <ModuleTabs>
        {modules.map((m, i) => (
          <ModuleTab key={m.t} type="button" $bg={m.bg} $w={m.w} $first={i === 0}><Icon n={m.i} s={10} />{m.t}</ModuleTab>
        ))}
        <ModuleTab type="button" $bg="#9db6e8" $w={82} $active><Icon n="designer" s={10} />Report Designer<TabClose><Cross c="#1d2f55" s={5} /></TabClose></ModuleTab>
      </ModuleTabs>
      <Workspace>
        <Editor>
          <ViewTabs>
            <ViewTab type="button" $w={51}><Icon n="listrep" s={10} />List Report</ViewTab>
            <ViewTab type="button" $w={65} $on><Icon n="formdes" s={11} />Form Designer</ViewTab>
            <ViewTab type="button" $w={64}><Icon n="datades" s={11} />Data Designer</ViewTab>
          </ViewTabs>
          <RulerRow>
            <Corner type="button" aria-label="Ruler origin" />
            <Ruler />
          </RulerRow>
          <CanvasRow>
            <Ruler vertical />
            <Canvas>
              <FormPage><FormDrawing /></FormPage>
              <FormLabel $x={364} $y={31}>:</FormLabel>
              <FormLabel $x={380} $y={31}>Number</FormLabel>
              <FormLabel $x={455} $y={31}>Order Date</FormLabel>
              <FormLabel $x={475} $y={49}>Status</FormLabel>
              <FormLabel $x={381} $y={232}>Qty</FormLabel>
              <FormLabel $x={427} $y={232}>Price</FormLabel>
              <FormLabel $x={475} $y={232}>Amount</FormLabel>
              <Cursor width="8" height="13" viewBox="0 0 8 13" aria-hidden="true"><path d="M.500 .500V10L2.800 8L4.300 11.500L6 10.800L4.500 7.500H7.500Z" fill="#fff" stroke="#333" strokeWidth=".8" /></Cursor>
            </Canvas>
            <ScrollBar>
              <ScrollButton type="button" aria-label="Scroll up"><Chevron up /></ScrollButton>
              <ScrollTrack>
                <ScrollThumb><svg width="5" height="6" viewBox="0 0 5 6"><path d="M0 .500H5M0 2.500H5M0 4.500H5" stroke="#7f9cc8" /></svg></ScrollThumb>
              </ScrollTrack>
              <ScrollButton type="button" aria-label="Scroll down"><Chevron /></ScrollButton>
            </ScrollBar>
          </CanvasRow>
        </Editor>
        <PropertyPanel />
      </Workspace>
      <StatusBar>
        <Message>For Help, press F1</Message>
        <Indicator $off>CAP</Indicator>
        <Indicator>NUM</Indicator>
        <Indicator>OVR</Indicator>
        <Indicator $off>SCRL</Indicator>
        <Zoom>
          <label htmlFor="zoom">100%</label>
          <button type="button" aria-label="Zoom out"><ZoomIcon /></button>
          <input id="zoom" type="range" min="0" max="200" defaultValue="100" />
          <button type="button" aria-label="Zoom in"><ZoomIcon plus /></button>
        </Zoom>
      </StatusBar>
      <GridDialog />
    </Shell>
  );
}
